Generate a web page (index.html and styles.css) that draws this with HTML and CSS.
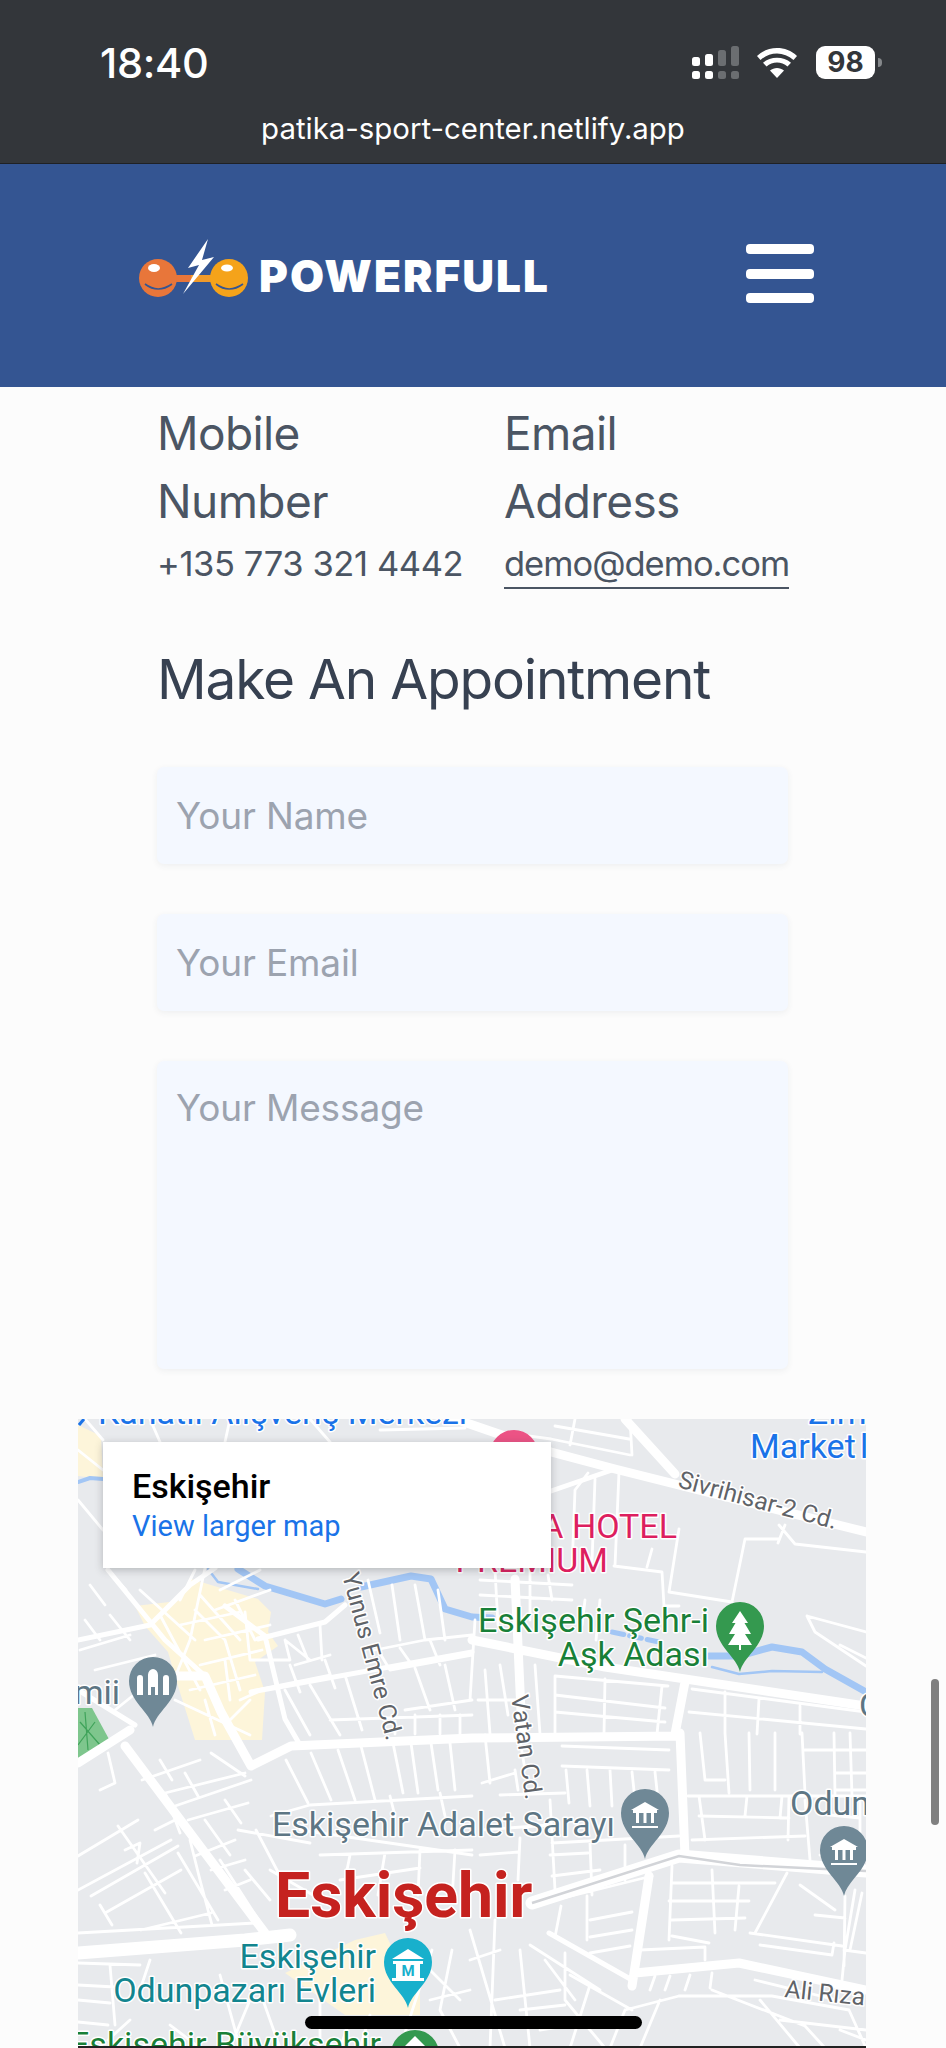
FILE: index.html
```html
<!DOCTYPE html>
<html lang="en">
<head>
<meta charset="utf-8">
<title>Powerfull</title>
<link rel="stylesheet" href="styles.css">
</head>
<body>
<div class="status">
  <div class="status-row">
    <span class="time">18:40</span>
    <div class="status-icons">
      <svg class="signal" viewBox="0 0 47 33" width="47" height="33">
        <rect class="on" x="0" y="11" width="8" height="9" rx="2.5"/><rect class="on" x="13" y="8" width="8" height="12" rx="2.5"/>
        <rect class="off" x="26" y="4" width="8" height="16" rx="2.5"/><rect class="off" x="39" y="0" width="8" height="20" rx="2.5"/>
        <rect class="on" x="0" y="25" width="8" height="8" rx="2.5"/><rect class="on" x="13" y="25" width="8" height="8" rx="2.5"/>
        <rect class="off" x="26" y="25" width="8" height="8" rx="2.5"/><rect class="off" x="39" y="25" width="8" height="8" rx="2.5"/>
      </svg>
      <svg class="wifi" viewBox="0 0 40 30" width="40" height="30">
        <path d="M20 30 L13 22.5 C17 19 23 19 27 22.5Z"/>
        <path d="M9.5 18.5 L6 14.8 C13.5 8 26.5 8 34 14.8 L30.5 18.5 C24.5 13.3 15.5 13.3 9.5 18.5Z"/>
        <path d="M3.5 12 L0 8 C11 -2.6 29 -2.6 40 8 L36.5 12 C27 3.2 13 3.2 3.5 12Z"/>
      </svg>
      <div class="battery"><span class="level">98</span></div>
      <span class="nub"></span>
    </div>
  </div>
  <div class="url">patika-sport-center.netlify.app</div>
</div>

<header class="site-header">
  <a class="logo" href="#">
    <svg class="logo-mark" viewBox="0 0 118 60" width="118" height="60">
      <rect x="22" y="37" width="70" height="7" fill="#f09a2a"/>
      <rect x="22" y="37" width="30" height="7" fill="#e8763a"/>
      <circle cx="19" cy="40" r="19" fill="#e8763a"/>
      <circle cx="90" cy="40" r="19" fill="#f5a31a"/>
      <ellipse cx="15" cy="30" rx="6" ry="4" fill="#fff"/>
      <ellipse cx="88" cy="30" rx="6" ry="3.5" fill="#fff"/>
      <path d="M6 46 Q19 56 33 46" fill="none" stroke="#345592" stroke-width="1.6"/>
      <path d="M77 46 Q90 56 104 46" fill="none" stroke="#345592" stroke-width="1.6"/>
      <path d="M69 1 L49 30 L60 27 L44 56 L75 19 L63 22 Z" fill="#fff"/>
    </svg>
    <span class="logo-text">POWERFULL</span>
  </a>
  <button class="menu" aria-label="Menu"><span></span><span></span><span></span></button>
</header>

<main class="content">
  <section class="contact-grid">
    <div>
      <h3 class="contact-title">Mobile Number</h3>
      <p class="contact-value">+135 773 321 4442</p>
    </div>
    <div>
      <h3 class="contact-title">Email Address</h3>
      <p class="contact-value"><a class="mail" href="#">demo@demo.com</a></p>
    </div>
  </section>

  <h2 class="form-title">Make An Appointment</h2>

  <form class="form">
    <input class="field" type="text" placeholder="Your Name">
    <input class="field" type="email" placeholder="Your Email">
    <textarea class="field area" placeholder="Your Message"></textarea>
  </form>
</main>

<section class="map">
  <svg class="map-canvas" viewBox="78 1419 788 629" width="788" height="629">
    <defs>
      <path id="pin" d="M0 70 C-3 55 -24 44 -24 24 A24 24 0 1 1 24 24 C24 44 3 55 0 70Z"/>
      <g id="court">
        <path class="pin-glyph" d="M0 13 L14 21 L-14 21Z"/>
        <path class="pin-glyph" d="M-12 21h24v3h-24z M-9 24h3v10h-3z M-1.500 24h3v10h-3z M6 24h3v10h-3z M-13 37h26v2h-26z"/>
      </g>
    </defs>
    <rect x="78" y="1419" width="788" height="629" class="land"/>

    <path class="yellow" d="M135 1606 L178 1601 L191 1579 L258 1599 L271 1612 L268 1632 L278 1646 L255 1662 L265 1692 L262 1740 L195 1740 L178 1686 L168 1652 L145 1626Z"/>
    <path class="yellow" d="M78 1425 L101 1436 L103 1479 L78 1476Z"/>
    <path class="yellow" d="M355 1940 L385 1933 L398 1960 L420 1990 L420 2015 L345 2015 L285 1973Z"/>
    <path class="park" d="M78 1708 L92 1708 L110 1741 L78 1763Z"/>
    <path class="park-line" d="M80 1722 L100 1745 M78 1745 L95 1722 M85 1712 L88 1750"/>

    <path class="river thick" d="M238 1569 L265 1586 L325 1604 L341 1599 M361 1587 L411 1576 L431 1579 L445 1609 L472 1617 L492 1618"/>
    <path class="river thin" d="M208 1569 L218 1582 L258 1589"/>
    <path class="river mid" d="M78 1482 L90 1478 L103 1479"/>
    <path class="river dash" d="M612 1632 L659 1642"/>
    <path class="river thick" d="M709 1656 L739 1656 L772 1647 L802 1652 L825 1669 L866 1692"/>
    <path class="river thin" d="M712 1667 L739 1674 L772 1671 L822 1672"/>

    <path class="road r2" d="
      M78 1450 L103 1470 M78 1500 L103 1530 M85 1419 L103 1440 M150 1419 L160 1442 M230 1419 L225 1442 M310 1419 L330 1442 M380 1430 L465 1428 M485 1430 L551 1439
      M555 1426 L629 1439 M551 1439 L630 1455 M575 1419 L570 1445 M630 1419 L632 1455 M588 1473 L575 1490
      M619 1472 L615 1566 M595 1479 L592 1562 M575 1490 L572 1570 M652 1549 L647 1567 M614 1566 L662 1572 L664 1606 L679 1606
      M679 1529 L669 1592 L732 1602 L745 1539 L779 1539 M779 1525 L795 1544 L866 1552 M785 1525 L778 1543
      M807 1616 L866 1632 M807 1616 L815 1632 L866 1666 M840 1645 L866 1658
      M480 1580 L572 1585 M480 1595 L572 1600 M495 1570 L498 1625 M548 1575 L552 1600 M530 1570 L530 1620 M585 1600 L582 1625 M600 1600 L596 1640
      M555 1676 L668 1686 M555 1695 L665 1708 M555 1712 L665 1722 M692 1689 L866 1712 M689 1712 L866 1729
      M725 1692 L725 1734 M759 1699 L757 1734 M800 1706 L800 1734 M555 1676 L555 1734 M605 1679 L604 1734 M662 1686 L657 1734
      M485 1670 L490 1734 M500 1665 L508 1715 M535 1665 L540 1734 M478 1700 L520 1700
      M725 1733 L729 1793 M749 1733 L750 1790 M775 1733 L775 1790 M802 1733 L805 1793 M834 1733 L835 1796 M700 1733 L705 1780 L725 1780
      M805 1750 L866 1750 M835 1773 L866 1773 M835 1790 L866 1790 M850 1733 L852 1796
      M699 1796 L705 1840 M747 1796 L745 1816 M782 1796 L780 1818 M699 1816 L789 1818 M692 1840 L805 1836 M789 1796 L788 1840 M805 1800 L810 1860 M830 1815 L860 1818 M688 1796 L866 1796
      M860 1796 L860 1850 M840 1830 L835 1850 L820 1855
      M562 1766 L669 1770 M562 1746 L669 1750 M566 1770 L569 1803 M587 1770 L590 1806 M610 1770 L612 1806 M632 1772 L635 1800 M655 1772 L658 1800
      M482 1783 L515 1773 M515 1770 L518 1790 M485 1735 L490 1783 M520 1740 L525 1770 M500 1795 L565 1793
      M552 1843 L679 1836 M550 1855 L588 1853 M552 1876 L600 1870 M590 1843 L592 1895 M625 1845 L625 1880 M480 1830 L550 1825 M520 1838 L518 1880 M550 1800 L555 1890 M480 1855 L518 1852
      M555 1900 L652 1876 M590 1920 L632 1912 M590 1937 L632 1930 M590 1953 L630 1946 M587 1896 L587 1940 M561 1906 L555 1937
      M672 1883 L775 1883 M669 1901 L749 1901 M672 1920 L745 1918 M672 1936 L709 1943 M750 1933 L842 1946 M845 1896 L844 1966 M712 1870 L715 1933 M672 1866 L669 1940
      M739 1886 L735 1930 M640 1950 L705 1947 M705 1947 L705 1960 M834 1943 L832 1955 L760 1945 M844 1950 L866 1953 M787 1873 L755 1933
      M845 1950 L842 1980 M862 1893 L850 1950 M855 1890 L845 1950 M800 1885 L835 1910 M815 1915 L845 1918
      M679 1996 L772 1996 L849 2010 L866 2048 M625 2010 L679 1996 M712 1990 L805 2026 L825 2048 M755 1980 L849 2003 M655 1976 L650 1990 M670 1976 L665 1990 M690 1975 L685 1990 M712 1973 L710 1988
      M760 2000 L800 2048 M840 2030 L866 2040 M780 2020 L866 2030 M660 2000 L640 2048 M625 2010 L610 2048
      M495 1920 L490 2048 M470 1930 L505 2048 M520 1950 L530 2048 M565 1953 L565 2000 L605 2048 M530 1945 L600 1990 M495 2000 L560 1990 M570 1975 L632 2010 M540 2030 L600 2020 M452 1950 L440 2010 L460 2048 M545 1960 L575 2000 M590 1985 L570 2048 M520 2010 L565 2005
      M432 1950 L400 2048 M430 2000 L470 1990 M470 1960 L500 1950 M420 1960 L460 2000
      M286 1760 L308 1803 M311 1753 L331 1800 M338 1750 L355 1800 M361 1746 L375 1800 M393 1743 L403 1793 M411 1743 L418 1793 M431 1743 L438 1790 M450 1743 L455 1790 M271 1816 L310 1805 L472 1796
      M390 1796 L395 1816 M440 1793 L445 1816 M300 1830 L472 1855 M320 1855 L472 1850 M350 1855 L345 1880 M385 1853 L378 1895 M420 1850 L418 1895 M455 1850 L452 1900 M340 1880 L420 1868 M270 1870 L330 1905
      M165 1793 L245 1773 M185 1773 L198 1796 M211 1753 L245 1776 M175 1806 L251 1780 M188 1820 L248 1803 M225 1800 L241 1823 M238 1830 L310 1843 M245 1870 L270 1900 M256 1830 L290 1895 M220 1860 L265 1930
      M78 1856 L138 1820 M78 1890 L171 1840 M91 1896 L178 1846 M105 1913 L181 1870 M141 1930 L211 1913 M78 1933 L255 1923 M118 1826 L165 1893 M145 1873 L181 1933 M178 1853 L218 1920 M155 1830 L175 1820 M108 1753 L115 1783 L100 1790 M166 1795 L180 1833 M125 1850 L140 1843 L137 1863
      M190 1840 L200 1880 M195 1856 L235 1840 M200 1880 L212 1925 M211 1870 L245 1860 M205 1820 L230 1855 M225 1890 L250 1880 M142 1780 L200 1760 M160 1760 L172 1780 M100 1905 L112 1925
      M78 1963 L140 1965 M150 1960 L140 1990 M78 1985 L115 1987 M78 2000 L110 2003 M78 2022 L108 2025 M110 1965 L115 2025 M220 1975 L240 2048 M170 2025 L200 2048 M108 2040 L130 2020 M264 2003 L280 2048 M320 1990 L320 2048 M350 2020 L340 2048 M250 2000 L230 2048 M370 2015 L360 2048
      M108 1570 L126 1590 M90 1585 L105 1605 M85 1620 L100 1640 M110 1615 L130 1640 M80 1650 L130 1635 M95 1670 L155 1655 M140 1590 L195 1640 M180 1600 L195 1570 M205 1568 L190 1640 L170 1690 M220 1590 L260 1570 M215 1610 L270 1590 M205 1640 L270 1625 M200 1665 L262 1650 M190 1690 L255 1675 M195 1610 L225 1640 L240 1690 M235 1600 L255 1640 M230 1720 L250 1700 M115 1710 L140 1690
      M175 1700 L250 1735 M205 1700 L215 1735 M225 1660 L230 1700 M180 1625 L240 1612 M245 1612 L250 1660 M160 1615 L200 1690 M240 1700 L262 1690 M200 1595 L240 1640
      M285 1640 L310 1660 M298 1635 L308 1660 M250 1660 L290 1660 L285 1640 M320 1625 L322 1660 M290 1665 L300 1692 M325 1660 L335 1688 M255 1690 L330 1675 M285 1690 L310 1735 M310 1685 L340 1735 M345 1675 L362 1730 M295 1665 L330 1655
      M368 1580 L380 1633 M392 1585 L400 1640 M415 1585 L425 1640 M438 1590 L445 1640 M375 1650 L425 1640 L472 1635 M378 1650 L390 1670 M400 1648 L412 1665 M430 1640 L440 1665 M390 1670 L472 1655 M415 1668 L430 1710 M445 1665 L455 1710 M405 1710 L472 1700 M330 1720 L472 1715 M395 1720 L395 1734 M415 1715 L415 1734 M440 1715 L440 1734 M460 1715 L460 1734 M475 1620 L470 1700"/>
    <path class="road r7" d="
      M551 1491 L615 1469 M258 1639 L325 1622 L345 1605 M225 1606 L265 1636 L285 1719 L300 1745 M251 1692 L472 1652 M549 1933 L632 1980 M78 1640 L150 1625 L190 1585 L215 1568 M78 1690 L135 1725 M108 1570 L165 1640 L205 1676"/>
    <path class="road r10" d="
      M400 1400 L551 1452 L615 1469 L866 1532 M625 1419 L675 1474 M472 1640 L605 1667 L866 1706 M515 1579 L522 1734 M685 1682 L675 1734 M680 1733 L685 1856
      M125 1746 L265 1933 M78 1763 L130 1730 M175 1676 L205 1676 L221 1712 L251 1766 M251 1766 L291 1746 L472 1738 L680 1736 M649 1876 L632 1986 M635 1973 L739 1963 L866 1990"/>
    <path class="road r14" d="M78 1953 L245 1940 L290 1935 M532 1903 L679 1856 L866 1871"/>
    <path class="median" d="M532 1903 L679 1856 L740 1865 L866 1871"/>

    <use href="#pin" x="514" y="1430" class="pin pink"/>
    <use href="#pin" x="740" y="1602" class="pin green"/>
    <path class="pin-glyph" d="M740 1611 L748 1623 L744.500 1623 L751 1634 L745 1634 L752 1645 L741 1645 V1650 H739 V1645 L728 1645 L735 1634 L729 1634 L735.500 1623 L732 1623Z"/>
    <use href="#pin" x="153" y="1657" class="pin slate"/>
    <path class="pin-glyph" d="M137 1678 a3 3 0 0 1 6 0 V1695 H137Z M148 1675 a5 6 0 0 1 10 0 V1680 H158 V1695 H155 V1687 H151 V1695 H148Z M163 1678 a3 3 0 0 1 6 0 V1695 H163Z"/>
    <use href="#pin" x="645" y="1789" class="pin slate"/>
    <use href="#court" x="645" y="1789"/>
    <use href="#pin" x="844" y="1826" class="pin slate"/>
    <use href="#court" x="844" y="1826"/>
    <use href="#pin" x="408" y="1938" class="pin teal"/>
    <path class="pin-glyph" d="M408 1949 L424 1959 H392Z M393 1961 H423 V1964 H420 V1978 H424 V1981 H392 V1978 H396 V1964 H393Z"/>
    <text x="408" y="1976" class="m-mark">M</text>
    <use href="#pin" x="415" y="2030" class="pin green"/>
    <path class="pin-glyph" d="M415 2036 L427 2048 H403Z"/>

    <path class="chevron" d="M84 1419 L79 1425"/>
    <text x="98" y="1424" class="lbl blue">Kanatlı Alışveriş Merkezi</text>
    <text x="808" y="1424" class="lbl blue">Zim</text>
    <text x="750" y="1458" class="lbl blue">Market <tspan x="860">l</tspan></text>
    <text x="677" y="1538" class="lbl pinkt end">A HOTEL</text>
    <text x="608" y="1572" class="lbl pinkt end">PREMIUM</text>
    <text x="709" y="1632" class="lbl greent end">Eskişehir Şehr-i</text>
    <text x="709" y="1666" class="lbl greent end">Aşk Adası</text>
    <text x="120" y="1704" class="lbl slatet end">Camii</text>
    <text x="272" y="1836" class="lbl slatet">Eskişehir Adalet Sarayı</text>
    <text x="790" y="1815" class="lbl slatet">Odun</text>
    <text x="859" y="1717" class="lbl slatet">O</text>
    <text x="275" y="1917" class="lbl city">Eskişehir</text>
    <text x="376" y="1968" class="lbl tealt end">Eskişehir</text>
    <text x="376" y="2002" class="lbl tealt end">Odunpazarı Evleri</text>
    <text x="381" y="2056" class="lbl greent end">Eskişehir Büyükşehir</text>
    <text transform="translate(677 1487) rotate(15)" class="lbl street">Sivrihisar-2 Cd.</text>
    <text transform="translate(342 1575) rotate(75)" class="lbl street">Yunus Emre Cd.</text>
    <text transform="translate(511 1696) rotate(82)" class="lbl street">Vatan Cd.</text>
    <text transform="translate(784 1997) rotate(6)" class="lbl street">Ali Rıza</text>
  </svg>
  <div class="place-card">
    <div class="place-name">Eskişehir</div>
    <a class="place-link" href="#">View larger map</a>
  </div>
  <div class="map-edge"></div>
</section>

<div class="scrollbar"></div>
<div class="home-bar"></div>
</body>
</html>
```
FILE: styles.css
```css
* { box-sizing: border-box; }
html, body { margin: 0; padding: 0; height: 2048px; overflow: hidden; }
body { background: #fcfcfc; font-family: Inter, "Noto Sans", sans-serif; position: relative; }

.status { height: 164px; background: #33363a; border-bottom: 1px solid #1f2124; color: #fff; }
.status-row { height: 110px; padding: 36px 64px 0 100px; display: flex; justify-content: space-between; align-items: flex-start; }
.time { font-size: 41.500px; line-height: 54px; font-weight: 500; letter-spacing: -0.3px; }
.status-icons { display: flex; align-items: flex-start; padding-top: 10px; }
.signal { margin-right: 18px; }
.signal .on { fill: #fff; }
.signal .off { fill: #6b6e71; }
.wifi { margin-right: 19px; margin-top: 2px; fill: #fff; }
.battery { width: 59px; height: 33px; background: #fff; border-radius: 9px; display: flex; align-items: center; justify-content: center; }
.level { font-size: 28px; font-weight: 700; color: #33363a; line-height: 33px; }
.nub { width: 4px; height: 9px; margin: 12px 0 0 3px; background: #85888b; border-radius: 0 4px 4px 0; }
.url { text-align: center; font-size: 29.400px; line-height: 40px; margin-top: -1px; color: #fff; }

.site-header { height: 223px; background: #345592; display: flex; align-items: center; justify-content: space-between; padding: 0 132px 0 139px; }
.logo { display: flex; align-items: flex-end; text-decoration: none; padding-bottom: 15px; }
.logo-mark { display: block; margin-right: 2px; }
.logo-text { font-weight: 900; font-size: 44px; line-height: 44px; color: #fff; letter-spacing: 2.1px; }
.menu { width: 68px; padding: 0; border: 0; background: none; display: flex; flex-direction: column; gap: 14.500px; margin-bottom: 4px; }
.menu span { display: block; height: 10px; background: #fff; border-radius: 4px; }

.content { padding: 0 157px; }
.contact-grid { display: grid; grid-template-columns: 347px 283px; padding-top: 12px; }
.contact-title { margin: 0; font-size: 46px; line-height: 68px; font-weight: 400; letter-spacing: -0.6px; color: #4b5563; width: 240px; }
.contact-value { margin: 0; font-size: 34.500px; line-height: 58px; font-weight: 400; letter-spacing: -0.4px; color: #4b5563; white-space: nowrap; }
.mail { color: inherit; text-decoration: none; letter-spacing: -1px; border-bottom: 2px solid #4b5563; padding-bottom: 3px; }
.form-title { margin: 45px 0 0; font-size: 55px; line-height: 82px; font-weight: 400; letter-spacing: -1.2px; color: #374151; white-space: nowrap; }
.form { margin-top: 47px; display: flex; flex-direction: column; gap: 50px; }
.field { display: block; width: 631px; height: 97px; padding: 0 19px; border: 0; border-radius: 7px; background: #f4f8ff; box-shadow: 0 2px 6px rgba(60, 70, 90, 0.07); font: 400 37px Inter, sans-serif; letter-spacing: -0.15px; color: #4b5563; outline: none; }
.field::placeholder { color: #9ca3af; opacity: 1; }
.area { height: 308px; padding-top: 24px; resize: none; overflow: hidden; line-height: 46px; }

.map { position: absolute; left: 78px; top: 1419px; width: 788px; height: 629px; overflow: hidden; }
.map-canvas { display: block; }
.land { fill: #e8eaed; }
.yellow { fill: #fdf5da; }
.park { fill: #7ec68d; }
.park-line { fill: none; stroke: #3fa35a; stroke-width: 1.2; }
.river { fill: none; stroke: #a2c6f5; stroke-linecap: round; stroke-linejoin: round; }
.river.thick { stroke-width: 7; }
.river.mid { stroke-width: 4; }
.river.thin { stroke-width: 2.500; }
.river.dash { stroke-width: 5; stroke-dasharray: 12 6; }
.road { fill: none; stroke: #fff; stroke-linecap: round; stroke-linejoin: round; }
.r2 { stroke-width: 2.800; }
.r7 { stroke-width: 5; }
.r10 { stroke-width: 9; }
.r14 { stroke-width: 13; }
.median { fill: none; stroke: #d2d4d8; stroke-width: 2.500; }
.chevron { fill: none; stroke: #1a73e8; stroke-width: 3; }
.pin.pink { fill: #ec5385; }
.pin.green { fill: #34994f; }
.pin.slate { fill: #6f8896; }
.pin.teal { fill: #18b0cc; }
.pin-glyph { fill: #fff; }
.m-mark { font: 700 15px Roboto, sans-serif; fill: #18b0cc; text-anchor: middle; }
.lbl { font: 400 34px Roboto, sans-serif; paint-order: stroke; stroke: #fff; stroke-width: 3px; stroke-linejoin: round; }
.end { text-anchor: end; }
.blue { fill: #1a73e8; }
.pinkt { fill: #dd1f5f; }
.greent { fill: #188038; }
.slatet { fill: #5d7684; }
.tealt { fill: #12858f; }
.city { font-size: 62.500px; font-weight: 700; fill: #c5221f; }
.street { font-size: 24.500px; fill: #5f6368; }

.place-card { position: absolute; left: 25px; top: 23px; width: 448px; height: 126px; padding: 23px 29px 0; background: #fff; box-shadow: 0 2px 8px rgba(60, 64, 67, 0.3); }
.place-name { font: 500 34px/42px Roboto, sans-serif; color: #000; }
.place-link { display: block; font: 400 29px/38px Roboto, sans-serif; color: #1a73e8; text-decoration: none; }
.map-edge { position: absolute; left: 0; right: 0; bottom: 0; height: 2px; background: #222; }

.scrollbar { position: absolute; left: 931px; top: 1679px; width: 8px; height: 146px; border-radius: 4px; background: #808080; }
.home-bar { position: absolute; left: 305px; top: 2016px; width: 337px; height: 13px; border-radius: 7px; background: #000; }
```
